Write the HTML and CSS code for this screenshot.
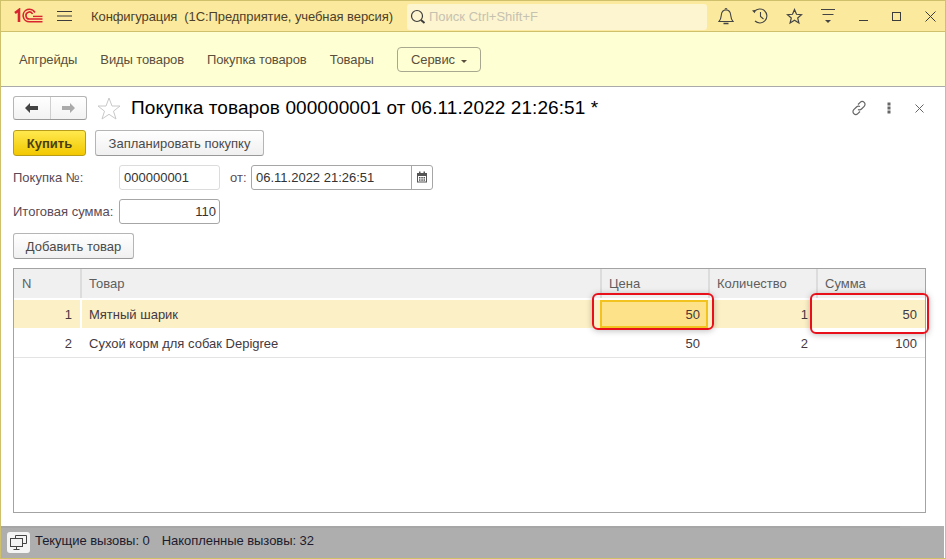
FILE: index.html
```html
<!DOCTYPE html>
<html lang="ru">
<head>
  <meta charset="UTF-8" />
  <title>Покупка товаров</title>
  <link rel="stylesheet" href="styles.css">
</head>
<body>
  <div class="window">
    <header class="topbar">
      <svg class="logo" width="30" height="16" viewBox="0 0 30 16" fill="none" stroke="#d9232e" stroke-width="1.6">
        <path d="M1 5 L5 2 V14" stroke-width="2.6"/>
        <path d="M28.5 13.8 H15.5 A6.3 6.3 0 1 1 21 4.5"/>
        <path d="M28.5 11 H15.5 A3.5 3.5 0 1 1 18.6 6"/>
        <path d="M19 8.4 H28.5" stroke-width="1.4"/>
      </svg>
      <svg class="burger" width="15" height="12" viewBox="0 0 15 12" stroke="#3c3c3c" stroke-width="1">
        <path d="M0 1.5H15M0 6H15M0 10.5H15"/>
      </svg>
      <span class="app-title">Конфигурация&nbsp; (1С:Предприятие, учебная версия)</span>
      <div class="search">
        <svg width="17" height="17" viewBox="0 0 17 17" fill="none" stroke="#3c3c3c">
          <circle cx="7" cy="8" r="5.5" stroke-width="1.2"/>
          <path d="M11 12l3.5 3" stroke-width="2"/>
        </svg>
        <span>Поиск Ctrl+Shift+F</span>
      </div>
      <div class="top-icons">
        <svg width="16" height="18" viewBox="0 0 16 18" fill="none" stroke="#444" stroke-width="1.1">
          <path d="M1 14.5c2-2 2-3.5 2.3-6.500C3.600 5 5 3 8 3s4.400 2 4.700 5c.3 3 .3 4.500 2.300 6.500z"/>
          <path d="M7 2.500a1 1 0 0 1 2 0"/>
          <path d="M5.500 16.500h5" stroke-width="1.500"/>
        </svg>
        <svg width="18" height="18" viewBox="0 0 18 18" fill="none" stroke="#444" stroke-width="1.1">
          <path d="M3.500 4.500A7 7 0 1 1 4 14"/>
          <path d="M1 3.500l2.800 2.800 1-3.500z" fill="#444" stroke="none"/>
          <path d="M9.500 5v4.500l3 2.500"/>
        </svg>
        <svg width="17" height="17" viewBox="0 0 17 17" fill="none" stroke="#444" stroke-width="1.200">
          <path d="M8.500 1.500l2 4.800 5 .4-3.800 3.300 1.200 5-4.400-2.700-4.400 2.700 1.200-5L1.500 6.700l5-.4z"/>
        </svg>
        <svg width="16" height="16" viewBox="0 0 16 16" stroke="#444" stroke-width="1">
          <path d="M1 1.500H15M2.500 6.500H13.500"/>
          <path d="M5 12h6l-3 3z" fill="#444" stroke="none"/>
        </svg>
      </div>
      <div class="win-controls">
        <span class="win-min"></span>
        <span class="win-max"></span>
        <svg width="11" height="11" viewBox="0 0 11 11" stroke="#3c3c3c" stroke-width="1">
          <path d="M.5.500l10 10M10.500.500l-10 10"/>
        </svg>
      </div>
    </header>

    <nav class="sections">
      <a>Апгрейды</a>
      <a>Виды товаров</a>
      <a>Покупка товаров</a>
      <a>Товары</a>
      <button class="service">Сервис <i class="caret"></i></button>
    </nav>

    <main class="form">
      <div class="title-row">
        <div class="nav-btns">
          <span class="nav-btn">
            <svg width="13" height="10" viewBox="0 0 13 10" fill="#444"><path d="M0 5l5-5v3h8v4H5v3z"/></svg>
          </span>
          <span class="nav-btn">
            <svg width="13" height="10" viewBox="0 0 13 10" fill="#aaa"><path d="M13 5L8 0v3H0v4h8v3z"/></svg>
          </span>
        </div>
        <svg class="fav" width="24" height="23" viewBox="0 0 24 23" fill="#fff" stroke="#c8c8c8">
          <path d="M12 1l3 8h8l-6.500 5.200L19 22l-7-4.700L5 22l2.500-7.800L1 9h8z"/>
        </svg>
        <h1>Покупка товаров 000000001 от 06.11.2022 21:26:51 *</h1>
        <div class="form-tools">
          <svg width="16" height="16" viewBox="0 0 16 16" fill="none" stroke="#666" stroke-width="1.200">
            <path d="M7 4.500l2.200-2.200a2.800 2.800 0 0 1 4 4L10.500 9a2.800 2.800 0 0 1-3.500.4"/>
            <path d="M9 11.500l-2.200 2.200a2.800 2.800 0 0 1-4-4L5.500 7a2.800 2.800 0 0 1 3.500-.4"/>
          </svg>
          <svg width="4" height="12" viewBox="0 0 4 12" fill="#666">
            <rect x="0.500" y="0.500" width="3" height="3"/><rect x="0.500" y="4.500" width="3" height="3"/><rect x="0.500" y="8.500" width="3" height="3"/>
          </svg>
          <svg class="form-close" width="9" height="9" viewBox="0 0 9 9" stroke="#666" stroke-width="1">
            <path d="M.5.500l8 8M8.500.500l-8 8"/>
          </svg>
        </div>
      </div>

      <div class="actions">
        <button class="btn btn-primary">Купить</button>
        <button class="btn btn-plan">Запланировать покупку</button>
      </div>

      <div class="field-row">
        <label class="label">Покупка №:</label>
        <div class="input input-off">000000001</div>
        <label class="label-date">от:</label>
        <div class="input input-date">
          <span>06.11.2022 21:26:51</span>
          <span class="date-btn">
            <svg width="12" height="12" viewBox="0 0 12 12" fill="#555">
              <path d="M1 2h10v9.500H1zM2 5v5.500h8V5z" fill-rule="evenodd"/>
              <rect x="3" y="0.500" width="1.500" height="2"/><rect x="7.500" y="0.500" width="1.500" height="2"/>
              <rect x="3" y="6" width="1.500" height="1.500"/><rect x="5.300" y="6" width="1.500" height="1.500"/><rect x="7.500" y="6" width="1.500" height="1.500"/>
              <rect x="3" y="8.300" width="1.500" height="1.500"/><rect x="5.300" y="8.300" width="1.500" height="1.500"/><rect x="7.500" y="8.300" width="1.500" height="1.500"/>
            </svg>
          </span>
        </div>
      </div>

      <div class="field-row">
        <label class="label">Итоговая сумма:</label>
        <div class="input input-num">110</div>
      </div>

      <button class="btn btn-add">Добавить товар</button>

      <div class="table">
        <div class="row head">
          <div class="cell">N</div>
          <div class="cell">Товар</div>
          <div class="cell">Цена</div>
          <div class="cell">Количество</div>
          <div class="cell">Сумма</div>
        </div>
        <div class="row current">
          <div class="cell num">1</div>
          <div class="cell">Мятный шарик</div>
          <div class="cell num selected">50</div>
          <div class="cell num">1</div>
          <div class="cell num">50</div>
        </div>
        <div class="row">
          <div class="cell num">2</div>
          <div class="cell">Сухой корм для собак Depigree</div>
          <div class="cell num">50</div>
          <div class="cell num">2</div>
          <div class="cell num">100</div>
        </div>
        <span class="mark mark-price"></span>
        <span class="mark mark-sum"></span>
      </div>
    </main>

    <footer class="status">
      <span class="status-btn">
        <svg width="17" height="15" viewBox="0 0 17 15" fill="none" stroke="#444" stroke-width="1">
          <path d="M5.500 3V.500h11v8H13"/>
          <rect x="0.500" y="3.500" width="12" height="8" fill="#f4f4f4"/>
          <path d="M6.500 11.500v2.500M3.500 14.500h6"/>
        </svg>
      </span>
      <span class="status-text">Текущие вызовы: 0</span>
      <span class="status-text">Накопленные вызовы: 32</span>
    </footer>
  </div>
</body>
</html>
```

FILE: styles.css
```css
* {
  box-sizing: border-box;
}
body {
  margin: 0;
  font-family: "Liberation Sans", Arial, sans-serif;
  font-size: 13px;
  color: #4a4a4a;
}
.window {
  width: 946px;
  height: 559px;
  display: flex;
  flex-direction: column;
  border: 1px solid #cfc06c;
  background: #fff;
  overflow: hidden;
}

/* top bar */
.topbar {
  height: 31px;
  flex: none;
  display: flex;
  align-items: center;
  background: #fbea9e;
  border-bottom: 1px solid #cfc06c;
  padding-left: 13px;
}
.logo {
  flex: none;
}
.burger {
  margin-left: 13px;
  flex: none;
}
.app-title {
  margin-left: 19px;
  width: 316px;
  letter-spacing: -0.08px;
  color: #4e3f2a;
  white-space: nowrap;
}
.search {
  width: 300px;
  height: 26px;
  margin-top: 1px;
  display: flex;
  align-items: center;
  gap: 2px;
  padding-left: 3px;
  background: #fdf5d0;
  border-radius: 3px;
  color: #c6c2b0;
}
.top-icons {
  display: flex;
  align-items: center;
  gap: 17px;
  margin-left: 11px;
}
.win-controls {
  display: flex;
  align-items: center;
  gap: 24px;
  margin-left: 23px;
}
.win-min {
  width: 9px;
  height: 9px;
  border-bottom: 1px solid #3c3c3c;
}
.win-max {
  width: 9px;
  height: 9px;
  border: 1px solid #3c3c3c;
}

/* sections */
.sections {
  height: 55px;
  flex: none;
  display: flex;
  align-items: center;
  gap: 23px;
  padding-left: 18px;
  background: #ffffd4;
  border-bottom: 1px solid #aaa;
  letter-spacing: -0.1px;
  color: #5a4f3c;
}
.service {
  width: 84px;
  height: 25px;
  padding: 0;
  border: 1px solid #a8a78f;
  border-radius: 4px;
  background: #ffffd4;
  font: inherit;
  letter-spacing: inherit;
  color: #5a4f3c;
}
.caret {
  display: inline-block;
  margin-left: 2px;
  vertical-align: 1px;
  border: 3px solid transparent;
  border-top-color: #5a4f3c;
  border-bottom: 0;
}

/* form */
.form {
  flex: 1;
  padding: 8px 0 13px 12px;
  display: flex;
  flex-direction: column;
  background: #fff;
}
.title-row {
  height: 26px;
  display: flex;
  align-items: center;
}
.nav-btns {
  width: 74px;
  height: 24px;
  display: flex;
  border: 1px solid #b5b5b5;
  border-bottom-color: #999;
  border-radius: 3px;
  background: linear-gradient(#fff, #f2f2f2);
}
.nav-btn {
  flex: 1;
  display: flex;
  align-items: center;
  justify-content: center;
}
.nav-btn + .nav-btn {
  border-left: 1px solid #cfcfcf;
}
.fav {
  margin-left: 10px;
  flex: none;
}
h1 {
  margin: 0 0 0 10px;
  font-size: 19px;
  letter-spacing: 0.08px;
  font-weight: 400;
  color: #000;
  white-space: nowrap;
}
.form-tools {
  margin-left: auto;
  width: 88px;
  margin-right: 6px;
  display: flex;
  align-items: center;
  gap: 20px;
}
.form-close {
  margin-left: 4px;
}
.actions {
  display: flex;
  gap: 9px;
  margin-top: 9px;
}
.btn {
  height: 26px;
  padding: 0;
  border: 1px solid #b5b5b5;
  border-bottom-color: #999;
  border-radius: 3px;
  background: linear-gradient(#fff, #f0f0f0);
  font: inherit;
  color: #4a4a4a;
}
.btn-primary {
  width: 73px;
  background: linear-gradient(#ffe94e, #f2c800);
  border-color: #b79d18;
  font-weight: 700;
  color: #4a3f10;
}
.btn-plan {
  width: 169px;
}
.btn-add {
  width: 121px;
  margin-top: 9px;
  flex: none;
}
.field-row {
  height: 26px;
  margin-top: 8px;
  display: flex;
  align-items: center;
}
.label {
  width: 106px;
  color: #5a4a55;
  white-space: nowrap;
}
.label-date {
  width: 31px;
  padding-left: 10px;
  color: #5a4a55;
}
.input {
  height: 25px;
  width: 101px;
  display: flex;
  align-items: center;
  padding: 0 4px;
  border: 1px solid #a6a6a6;
  border-radius: 3px;
  color: #333;
}
.input-off {
  border-color: #dcdcdc;
}
.input-num {
  justify-content: flex-end;
  padding-right: 3px;
}
.input-date {
  width: 182px;
  justify-content: space-between;
  padding-right: 0;
}
.date-btn {
  width: 21px;
  height: 100%;
  display: flex;
  align-items: center;
  justify-content: center;
  border-left: 1px solid #a6a6a6;
}

/* table */
.table {
  flex: 1;
  position: relative;
  width: 913px;
  margin-top: 9px;
  border: 1px solid #a3a3a3;
  background: #fff;
}
.row {
  display: grid;
  grid-template-columns: 66px 520px 108px 108px 1fr;
  height: 29px;
  border-bottom: 1px solid #e3e3e3;
  color: #44393f;
}
.row.head {
  height: 31px;
  background: #f0f0f0;
  border-bottom: 2px solid #fff;
  color: #5e5e5e;
}
.row.current {
  background: #fcf0c6;
  border-bottom: 1px solid #fff;
}
.cell {
  display: flex;
  align-items: center;
  padding: 0 8px 0 9px;
}
.head .cell:first-child {
  padding-left: 8px;
}
.head .cell + .cell {
  box-shadow: inset 2px 0 0 #dcdcdc;
}
.current .cell:nth-child(2) {
  box-shadow: inset 2px 0 0 #fff;
}
.num {
  justify-content: flex-end;
}
.selected {
  background: #fde28a;
  border: 2px solid #f2c21f;
  padding-right: 6px;
}
.mark {
  position: absolute;
  border: 2px solid #e8101a;
  border-radius: 6px;
  box-shadow: 0 1px 6px rgba(0, 0, 0, .25);
}
.mark-price {
  left: 578px;
  top: 24px;
  width: 122px;
  height: 37px;
}
.mark-sum {
  left: 796px;
  top: 24px;
  width: 119px;
  height: 41px;
}

/* status bar */
.status {
  height: 32px;
  flex: none;
  display: flex;
  align-items: center;
  gap: 12px;
  margin-right: 1px;
  padding-left: 6px;
  background: linear-gradient(#a6a6a6, #a6a6a6) no-repeat 0 0 / 899px 2px, #aeaeae;
  letter-spacing: -0.05px;
  color: #1c1c2e;
}
.status-text {
  margin-bottom: 4px;
}
.status-btn {
  width: 23px;
  height: 21px;
  display: flex;
  align-items: center;
  justify-content: center;
  background: #f4f4f4;
  border-radius: 3px;
  margin-right: -7px;
}
```
